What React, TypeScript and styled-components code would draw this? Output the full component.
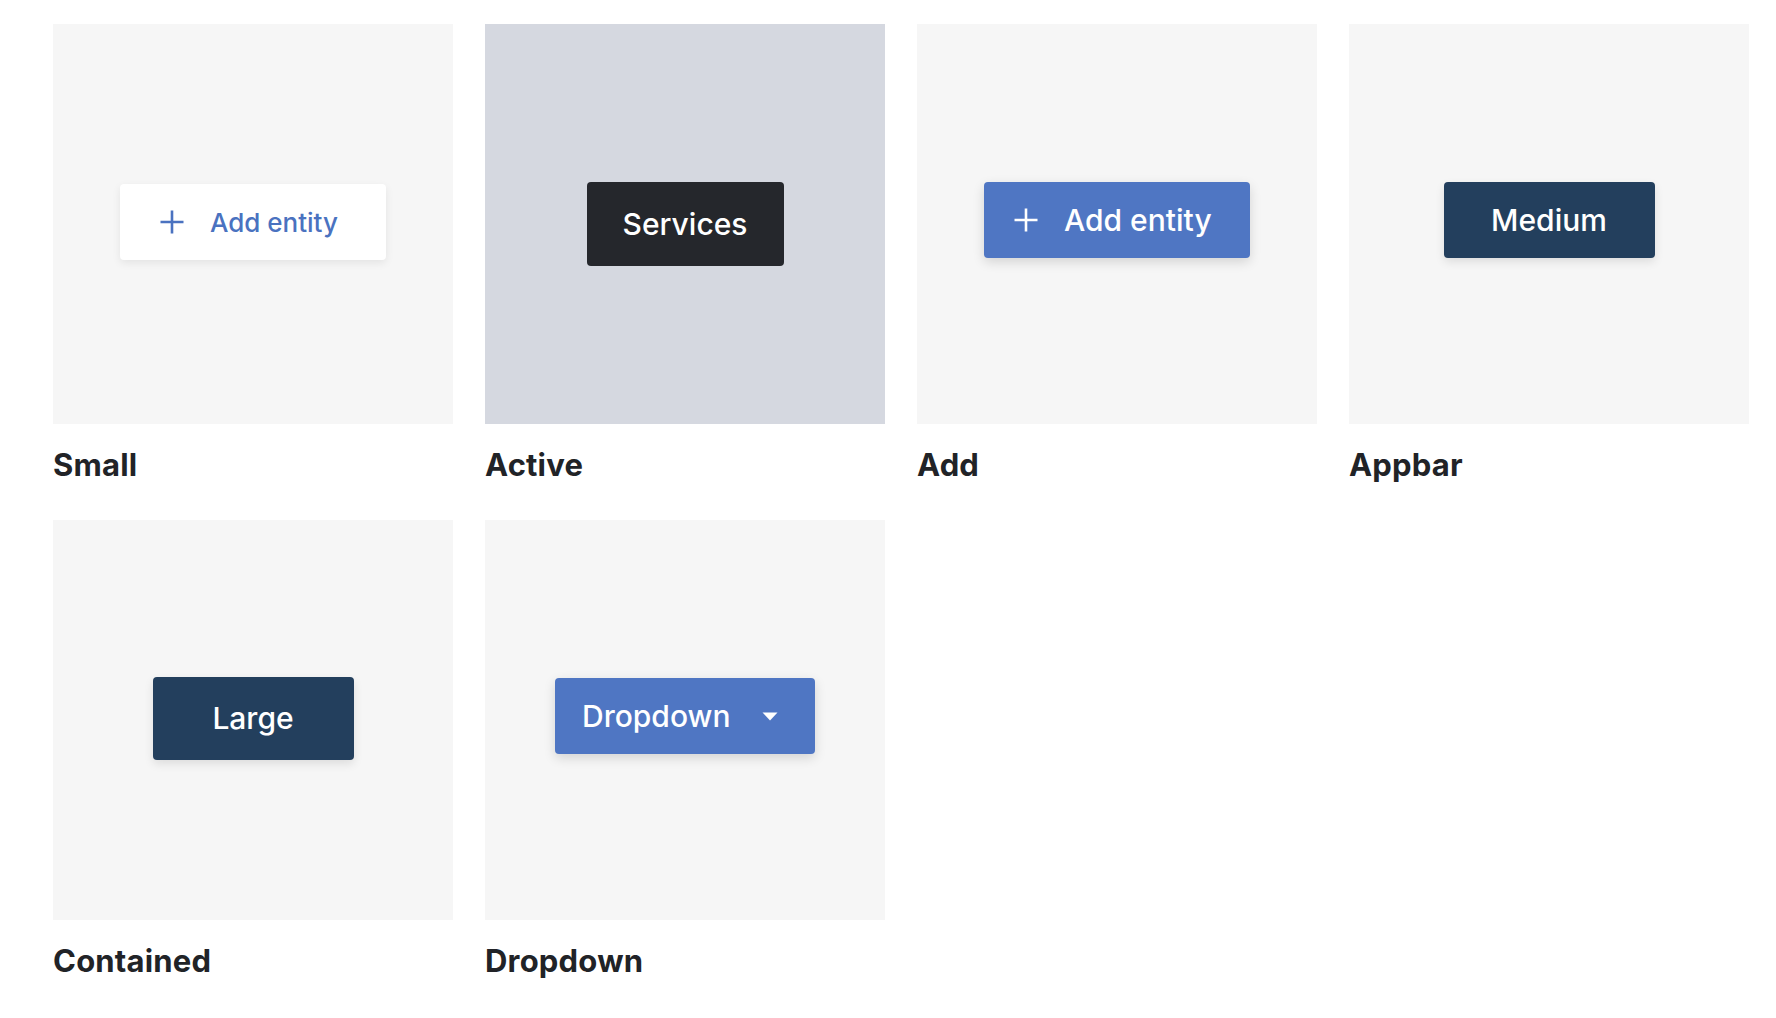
import React from 'react';
import styled, { createGlobalStyle, css } from 'styled-components';

const GlobalStyle = createGlobalStyle`
  body {
    margin: 0;
    background: #ffffff;
    font-family: Inter, "Noto Sans", sans-serif;
  }
`;

const Gallery = styled.main`
  display: grid;
  grid-template-columns: repeat(4, 400px);
  column-gap: 32px;
  row-gap: 37px;
  padding: 24px 0 0 53px;
`;

const Story = styled.section`
  display: flex;
  flex-direction: column;
`;

// $lift nudges the centred button up a little
const Preview = styled.div<{ $tone?: 'plain' | 'muted'; $lift?: number }>`
  display: flex;
  align-items: center;
  justify-content: center;
  width: 400px;
  height: 400px;
  box-sizing: border-box;
  padding-bottom: ${(p) => p.$lift ?? 4}px;
  background: ${(p) => (p.$tone === 'muted' ? '#d5d8e0' : '#f6f6f6')};
`;

const StoryTitle = styled.h3`
  margin: 22px 0 0;
  font-size: 31px;
  font-weight: 700;
  color: #212327;
  letter-spacing: 0.2px;
`;

type Variant = 'outline' | 'primary' | 'navy' | 'dark';

const variants = {
  outline: css`
    background: #ffffff;
    color: #4a72c0;
    box-shadow: 0 3px 8px rgba(0, 0, 0, 0.08);
  `,
  primary: css`
    background: #4f76c3;
    color: #ffffff;
    box-shadow: 0 4px 12px rgba(0, 0, 0, 0.14);
  `,
  navy: css`
    background: #233f5d;
    color: #ffffff;
    box-shadow: 0 4px 10px rgba(0, 0, 0, 0.1);
  `,
  dark: css`
    background: #25272c;
    color: #ffffff;
  `,
};

const Button = styled.button<{
  $variant: Variant;
  $width: number;
  $height: number;
  $padLeft?: number;
  $size?: number;
  $gap?: number;
}>`
  display: inline-flex;
  align-items: center;
  justify-content: ${(p) => (p.$padLeft ? 'flex-start' : 'center')};
  gap: ${(p) => p.$gap ?? 0}px;
  box-sizing: border-box;
  width: ${(p) => p.$width}px;
  height: ${(p) => p.$height}px;
  padding: 0 0 0 ${(p) => p.$padLeft ?? 0}px;
  border: none;
  border-radius: 4px;
  font-family: Inter, "Noto Sans", sans-serif;
  font-size: ${(p) => p.$size ?? 30}px;
  font-weight: 500;
  white-space: nowrap;
  cursor: pointer;
  ${(p) => variants[p.$variant]}
`;

const PlusIcon = ({ size }: { size: number }) => (
  <svg width={size} height={size} viewBox="0 0 24 24" fill="none">
    <path d="M12 0.5v23M0.5 12h23" stroke="currentColor" strokeWidth="2.6" />
  </svg>
);

const Caret = () => (
  <svg width="16" height="9" viewBox="0 0 16 9">
    <path d="M0.5 0.5h15L8 8.5z" fill="currentColor" />
  </svg>
);

const App: React.FC = () => {
  return (
    <>
      <GlobalStyle />
      <Gallery>
        <Story>
          <Preview>
            <Button $variant="outline" $width={266} $height={76} $padLeft={40} $size={26} $gap={26}>
              <PlusIcon size={24} />
              Add entity
            </Button>
          </Preview>
          <StoryTitle>Small</StoryTitle>
        </Story>
        <Story>
          <Preview $tone="muted" $lift={0}>
            <Button $variant="dark" $width={197} $height={84}>
              Services
            </Button>
          </Preview>
          <StoryTitle>Active</StoryTitle>
        </Story>
        <Story>
          <Preview $lift={8}>
            <Button $variant="primary" $width={266} $height={76} $padLeft={30} $gap={26}>
              <PlusIcon size={24} />
              Add entity
            </Button>
          </Preview>
          <StoryTitle>Add</StoryTitle>
        </Story>
        <Story>
          <Preview $lift={8}>
            <Button $variant="navy" $width={211} $height={76}>
              Medium
            </Button>
          </Preview>
          <StoryTitle>Appbar</StoryTitle>
        </Story>
        <Story>
          <Preview>
            <Button $variant="navy" $width={201} $height={83}>
              Large
            </Button>
          </Preview>
          <StoryTitle>Contained</StoryTitle>
        </Story>
        <Story>
          <Preview $lift={8}>
            <Button $variant="primary" $width={260} $height={76} $padLeft={27} $gap={32}>
              Dropdown
              <Caret />
            </Button>
          </Preview>
          <StoryTitle>Dropdown</StoryTitle>
        </Story>
      </Gallery>
    </>
  );
};

export default App;
